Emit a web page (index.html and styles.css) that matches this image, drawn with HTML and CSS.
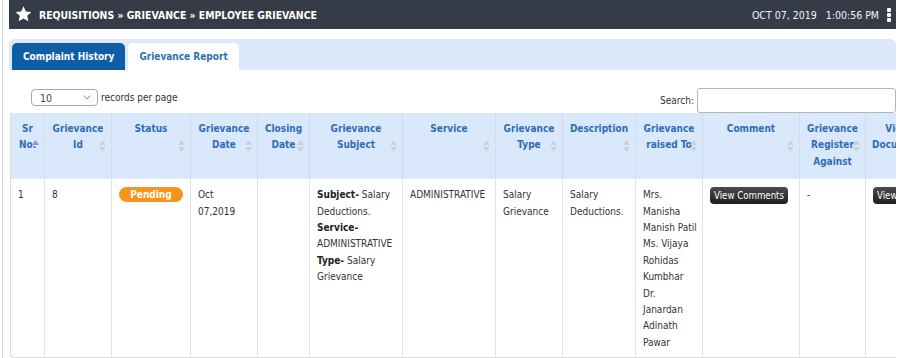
FILE: index.html
```html
<!DOCTYPE html>
<html>
<head>
<meta charset="utf-8">
<link rel="stylesheet" href="styles.css">
</head>
<body>
<div class="page">
  <div class="topbar">
    <div class="crumbs">
      <svg class="star" width="17" height="16" viewBox="0 0 24 23"><path d="M12 0.5l3.4 7.3 7.9 0.9-5.9 5.4 1.6 7.9L12 18.1l-7 3.9 1.6-7.9L0.7 8.7l7.9-0.9z" fill="#fff"/></svg>
      <span class="title">REQUISITIONS » GRIEVANCE » EMPLOYEE GRIEVANCE</span>
    </div>
    <div class="clock">
      <span>OCT 07, 2019&nbsp;&nbsp;&nbsp;1:00:56 PM</span>
      <span class="kebab"><i></i><i></i><i></i></span>
    </div>
  </div>

  <div class="tabbar">
    <div class="tab active">Complaint History</div>
    <div class="tab">Grievance Report</div>
  </div>

  <div class="controls">
    <div class="length">
      <div class="select"><span>10</span><svg width="8" height="5" viewBox="0 0 8 5"><path d="M0.5 0.5L4 4 7.5 0.5" fill="none" stroke="#888" stroke-width="1"/></svg></div>
      <span class="lbl">records per page</span>
    </div>
    <div class="search">
      <span class="lbl">Search:</span>
      <div class="input"></div>
    </div>
  </div>

  <div class="tablewrap">
    <table class="grid">
      <colgroup>
        <col style="width:34px"><col style="width:67px"><col style="width:79px"><col style="width:67px"><col style="width:52px"><col style="width:93px"><col style="width:93px"><col style="width:67px"><col style="width:73px"><col style="width:67px"><col style="width:97px"><col style="width:66px"><col style="width:64px">
      </colgroup>
      <thead>
        <tr>
          <th>Sr No.<svg class="sort" width="7" height="12" viewBox="0 0 7 12"><path d="M3.5 0L7 5H0z" fill="#8f92e8"/></svg></th>
          <th>Grievance Id<svg class="sort" width="7" height="12" viewBox="0 0 7 12"><path d="M3.5 0L7 5H0z M0 7h7L3.5 12z" fill="#c9d1dc"/></svg></th>
          <th>Status<svg class="sort" width="7" height="12" viewBox="0 0 7 12"><path d="M3.5 0L7 5H0z M0 7h7L3.5 12z" fill="#c9d1dc"/></svg></th>
          <th>Grievance Date<svg class="sort" width="7" height="12" viewBox="0 0 7 12"><path d="M3.5 0L7 5H0z M0 7h7L3.5 12z" fill="#c9d1dc"/></svg></th>
          <th>Closing Date<svg class="sort" width="7" height="12" viewBox="0 0 7 12"><path d="M3.5 0L7 5H0z M0 7h7L3.5 12z" fill="#c9d1dc"/></svg></th>
          <th>Grievance Subject<svg class="sort" width="7" height="12" viewBox="0 0 7 12"><path d="M3.5 0L7 5H0z M0 7h7L3.5 12z" fill="#c9d1dc"/></svg></th>
          <th>Service<svg class="sort" width="7" height="12" viewBox="0 0 7 12"><path d="M3.5 0L7 5H0z M0 7h7L3.5 12z" fill="#c9d1dc"/></svg></th>
          <th>Grievance Type<svg class="sort" width="7" height="12" viewBox="0 0 7 12"><path d="M3.5 0L7 5H0z M0 7h7L3.5 12z" fill="#c9d1dc"/></svg></th>
          <th>Description<svg class="sort" width="7" height="12" viewBox="0 0 7 12"><path d="M3.5 0L7 5H0z M0 7h7L3.5 12z" fill="#c9d1dc"/></svg></th>
          <th>Grievance raised To<svg class="sort" width="7" height="12" viewBox="0 0 7 12"><path d="M3.5 0L7 5H0z M0 7h7L3.5 12z" fill="#c9d1dc"/></svg></th>
          <th>Comment<svg class="sort" width="7" height="12" viewBox="0 0 7 12"><path d="M3.5 0L7 5H0z M0 7h7L3.5 12z" fill="#c9d1dc"/></svg></th>
          <th>Grievance Register Against<svg class="sort" width="7" height="12" viewBox="0 0 7 12"><path d="M3.5 0L7 5H0z M0 7h7L3.5 12z" fill="#c9d1dc"/></svg></th>
          <th>View Document<svg class="sort" width="7" height="12" viewBox="0 0 7 12"><path d="M3.5 0L7 5H0z M0 7h7L3.5 12z" fill="#c9d1dc"/></svg></th>
        </tr>
      </thead>
      <tbody>
        <tr>
          <td>1</td>
          <td>8</td>
          <td><span class="badge">Pending</span></td>
          <td>Oct 07,2019</td>
          <td></td>
          <td><b>Subject-</b> Salary Deductions.<br><b>Service-</b> ADMINISTRATIVE<br><b>Type-</b> Salary Grievance</td>
          <td>ADMINISTRATIVE</td>
          <td>Salary Grievance</td>
          <td>Salary Deductions.</td>
          <td>Mrs. Manisha <span class="nw">Manish Patil</span><br>Ms. Vijaya Rohidas Kumbhar<br>Dr. Janardan Adinath Pawar</td>
          <td><span class="btn">View Comments</span></td>
          <td>-</td>
          <td><span class="btn">View Document</span></td>
        </tr>
      </tbody>
    </table>
  </div>
</div>
</body>
</html>
```

FILE: styles.css
```css
html, body {
  margin: 0;
  padding: 0;
  background: #fff;
  overflow: hidden;
}
body {
  font-family: "DejaVu Sans Condensed", "DejaVu Sans", sans-serif;
  font-stretch: condensed;
  font-size: 10px;
  color: #333;
  width: 900px;
  height: 358px;
}
.page {
  margin-left: 2px;
  border-left: 1px solid #d6d6d6;
  padding: 0 4px 0 6px;
  height: 358px;
  box-sizing: border-box;
}
.topbar {
  height: 29px;
  background: #353b47;
  display: flex;
  align-items: center;
  justify-content: space-between;
  color: #fff;
  padding: 0 5px 0 6px;
}
.crumbs {
  display: flex;
  align-items: center;
  gap: 7px;
}
.star {
  display: block;
  margin-top: -1px;
}
.title {
  font-weight: bold;
  font-size: 10.4px;
}
.clock {
  display: flex;
  align-items: center;
  gap: 8px;
  font-size: 10.5px;
  color: #f2f4f7;
}
.kebab {
  display: flex;
  flex-direction: column;
  gap: 1px;
}
.kebab i {
  display: block;
  width: 4px;
  height: 4px;
  background: #fff;
  border-radius: 1px;
}
.tabbar {
  margin-top: 10px;
  height: 31px;
  background: #dde9fa;
  border-radius: 6px 6px 0 0;
  display: flex;
  align-items: flex-end;
  gap: 3px;
  padding-left: 3px;
  box-sizing: border-box;
}
.tab {
  height: 27px;
  box-sizing: border-box;
  padding: 0 11px;
  display: flex;
  align-items: center;
  font-weight: bold;
  font-size: 10px;
  color: #2f6eb3;
  background: #fff;
  border-radius: 5px 5px 0 0;
}
.tab.active {
  background: #0d5ea5;
  color: #fff;
}
.controls {
  display: flex;
  justify-content: space-between;
  align-items: center;
  margin-top: 18px;
  height: 25px;
}
.length {
  display: flex;
  align-items: center;
  gap: 3px;
  margin-left: 22px;
  margin-top: -6px;
}
.select {
  width: 67px;
  height: 17px;
  box-sizing: border-box;
  border: 1px solid #a9a9a9;
  border-radius: 4px;
  display: flex;
  align-items: center;
  justify-content: space-between;
  padding: 0 6px 0 8px;
  font-size: 10.5px;
  color: #444;
}
.lbl {
  font-size: 10px;
  color: #333;
}
.search {
  display: flex;
  align-items: center;
  gap: 3px;
}
.input {
  width: 199px;
  height: 25px;
  box-sizing: border-box;
  border: 1px solid #b5b5b5;
  border-radius: 3px;
  background: #fff;
}
.tablewrap {
  margin-left: 1px;
  border: 1px solid #dcdcdc;
  border-top: none;
  border-right: none;
  border-radius: 0 0 0 4px;
  overflow: hidden;
  height: 245px;
  box-sizing: border-box;
}
.grid {
  table-layout: fixed;
  width: 919px;
  border-collapse: separate;
  border-spacing: 0;
}
.grid th, .grid td {
  box-sizing: border-box;
  border-right: 1px solid #e3e3e3;
  line-height: 16.4px;
  vertical-align: top;
}
.grid th {
  position: relative;
  background: #dae8fb;
  color: #2f6db3;
  font-weight: bold;
  font-size: 10px;
  text-align: center;
  padding: 8px 6px 8px 6px;
  height: 65px;
  border-right-color: #cfdcec;
  border-bottom: 1px solid #e3eaf3;
}
.grid th .sort {
  position: absolute;
  right: 5px;
  top: 27px;
}
.grid td {
  padding: 8px 5px 6px 7px;
  text-align: left;
  height: 178px;
}
.grid td b {
  color: #222;
}
.nw {
  white-space: nowrap;
}
.badge {
  display: block;
  width: 64px;
  height: 15px;
  line-height: 15px;
  border-radius: 8px;
  background: #f7941d;
  color: #fff;
  font-weight: bold;
  text-align: center;
  font-size: 10px;
}
.btn {
  display: inline-block;
  height: 17px;
  line-height: 17px;
  padding: 0 4px;
  border-radius: 4px;
  background: linear-gradient(#4b4b4b, #1f1f1f);
  color: #fff;
  font-size: 9.6px;
  white-space: nowrap;
}
```
